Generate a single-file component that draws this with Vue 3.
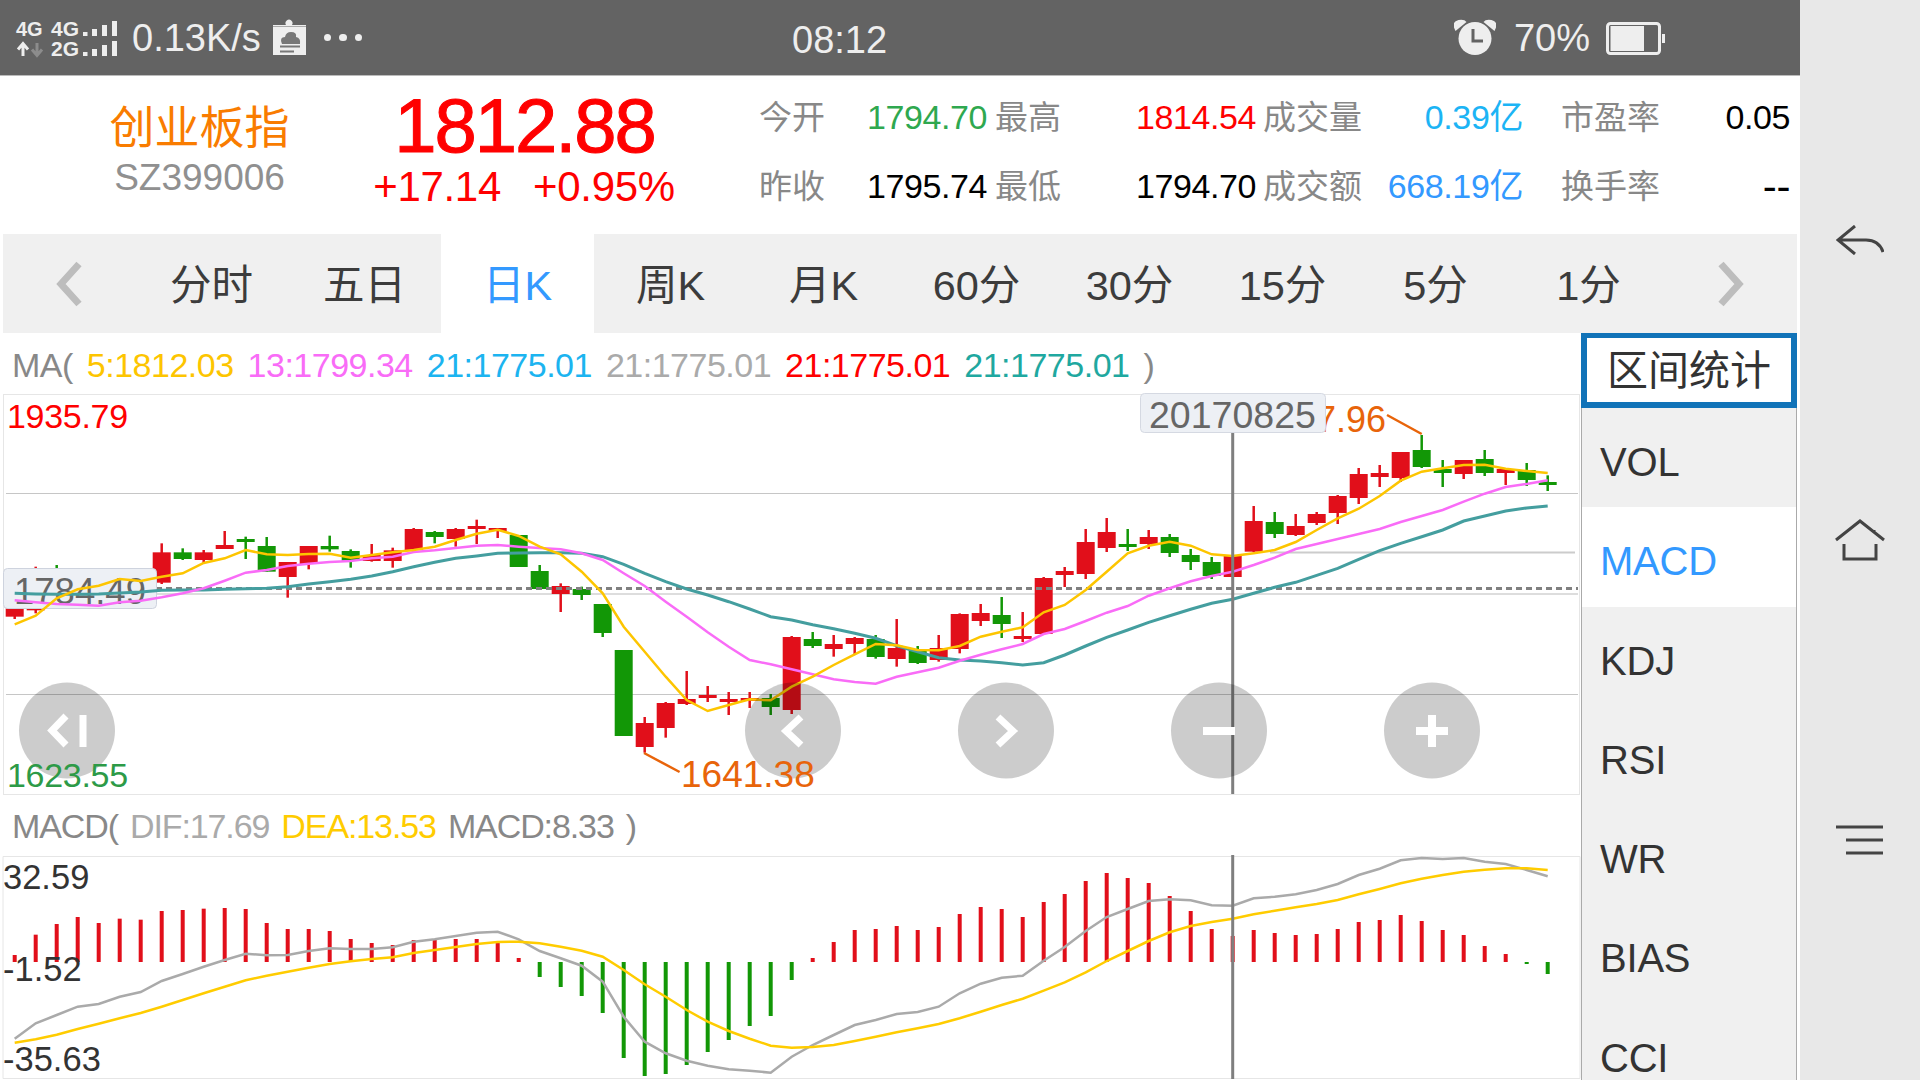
<script setup>
// 行情数据: the values below are y offsets inside each chart, in thirds of a pixel
const candleX = i => 14.7 + 21 * i
const priceY = v => 390 + v / 3
const macdY = v => 800 + v / 3

const tabs = ['分时', '五日', '日K', '周K', '月K', '60分', '30分', '15分', '5分', '1分']
const indicators = ['VOL', 'MACD', 'KDJ', 'RSI', 'WR', 'BIAS', 'CCI']

// [dir, wick top, body top, body bottom, wick bottom]
const rawCandles = [
  ['r', 640, 655, 680, 687], ['r', 530, 655, 661, 670], ['g', 525, 560, 570, 610], ['g', 560, 575, 590, 610],
  ['r', 570, 585, 600, 620], ['r', 570, 585, 600, 610], ['g', 575, 590, 600, 620], ['r', 460, 487, 578, 582],
  ['g', 475, 487, 507, 510], ['r', 480, 487, 510, 520], ['r', 423, 465, 477, 477], ['g', 440, 447, 456, 507],
  ['g', 441, 468, 545, 545], ['r', 516, 516, 561, 623], ['r', 468, 468, 522, 538], ['g', 437, 468, 478, 485],
  ['g', 478, 483, 512, 533], ['r', 462, 495, 513, 515], ['r', 473, 481, 513, 533], ['r', 414, 417, 480, 484],
  ['g', 423, 426, 441, 460], ['r', 414, 417, 447, 470], ['r', 389, 408, 417, 462], ['r', 414, 414, 423, 444],
  ['g', 435, 435, 531, 531], ['g', 525, 543, 597, 597], ['r', 580, 588, 612, 666], ['g', 590, 597, 615, 630],
  ['g', 642, 642, 729, 741], ['g', 780, 780, 1038, 1038], ['r', 981, 999, 1071, 1088], ['r', 936, 939, 1014, 1043],
  ['r', 843, 927, 942, 945], ['r', 888, 915, 924, 936], ['r', 906, 927, 936, 975], ['r', 906, 924, 933, 954],
  ['g', 912, 924, 951, 975], ['r', 738, 741, 960, 972], ['g', 726, 747, 768, 774], ['r', 735, 762, 777, 800],
  ['r', 741, 744, 762, 792], ['g', 735, 747, 801, 806], ['r', 687, 774, 807, 830], ['g', 768, 780, 819, 822],
  ['r', 735, 774, 810, 815], ['r', 670, 672, 777, 790], ['r', 642, 669, 693, 708], ['g', 621, 675, 702, 744],
  ['r', 666, 738, 747, 756], ['r', 561, 564, 732, 732], ['r', 531, 543, 555, 591], ['r', 417, 456, 552, 567],
  ['r', 384, 426, 474, 486], ['g', 417, 462, 471, 483], ['r', 420, 441, 462, 477], ['g', 432, 441, 489, 501],
  ['g', 477, 495, 516, 540], ['g', 501, 516, 558, 567], ['r', 498, 498, 561, 561], ['r', 348, 393, 485, 487],
  ['g', 366, 396, 432, 444], ['r', 372, 408, 435, 438], ['r', 366, 372, 399, 405], ['r', 315, 318, 369, 402],
  ['r', 234, 252, 324, 342], ['r', 225, 249, 261, 291], ['r', 186, 186, 264, 276], ['g', 135, 180, 231, 234],
  ['g', 210, 237, 249, 291], ['r', 210, 210, 252, 267], ['g', 180, 207, 249, 258], ['r', 237, 237, 249, 285],
  ['g', 219, 240, 270, 288], ['g', 256, 276, 285, 303]
]
const candles = rawCandles.map((c, i) => ({
  x: candleX(i),
  color: c[0] === 'r' ? '#e10f1a' : '#129706',
  wickTop: priceY(c[1]),
  top: priceY(c[2]),
  height: (c[3] - c[2]) / 3,
  wickBottom: priceY(c[4])
}))

const ma5 = [703, 677, 625, 598, 587, 567, 573, 560, 550, 519, 505, 480, 493, 495, 492, 491, 503, 495, 487, 480, 470, 450, 431, 419, 438, 470, 493, 545, 610, 710, 785, 860, 930, 963, 945, 928, 931, 890, 860, 825, 793, 762, 766, 780, 781, 768, 740, 725, 712, 667, 645, 600, 545, 490, 467, 455, 467, 493, 498, 490, 480, 456, 420, 385, 356, 318, 272, 245, 235, 225, 224, 236, 243, 249]
const ma13 = [631, 637, 642, 644, 647, 637, 632, 622, 610, 595, 572, 548, 540, 528, 521, 516, 513, 505, 500, 486, 481, 474, 467, 465, 470, 474, 478, 490, 510, 550, 588, 635, 680, 727, 770, 810, 823, 838, 853, 868, 876, 881, 860, 847, 833, 812, 794, 778, 762, 732, 717, 693, 668, 648, 617, 595, 574, 558, 545, 525, 503, 477, 462, 447, 432, 417, 396, 378, 360, 335, 311, 291, 282, 271]
const ma21 = [610, 612, 613, 613, 612, 609, 606, 601, 600, 600, 598, 596, 595, 590, 582, 575, 568, 558, 545, 530, 517, 505, 498, 490, 489, 488, 488, 490, 500, 523, 550, 575, 597, 615, 635, 657, 680, 690, 704, 716, 730, 745, 767, 785, 803, 810, 813, 818, 825, 818, 795, 768, 742, 720, 697, 677, 658, 640, 628, 610, 592, 577, 556, 535, 508, 482, 460, 440, 420, 393, 378, 363, 354, 348]

const dif = [716, 670, 645, 620, 612, 590, 576, 543, 522, 500, 480, 461, 466, 465, 453, 445, 447, 447, 442, 425, 418, 408, 398, 395, 418, 453, 475, 497, 545, 650, 725, 760, 782, 797, 808, 812, 818, 770, 735, 705, 675, 660, 642, 636, 620, 580, 551, 533, 527, 482, 441, 393, 351, 327, 303, 298, 301, 316, 317, 295, 290, 283, 270, 252, 225, 206, 181, 174, 177, 174, 185, 192, 210, 229]
const dea = [728, 718, 704, 687, 671, 655, 639, 620, 600, 580, 560, 541, 527, 515, 503, 492, 484, 477, 472, 459, 450, 441, 432, 426, 425, 430, 440, 452, 470, 510, 553, 590, 630, 665, 693, 716, 737, 743, 741, 735, 723, 710, 697, 685, 672, 655, 635, 615, 596, 572, 547, 517, 483, 453, 423, 397, 378, 366, 356, 343, 332, 322, 312, 300, 283, 267, 250, 236, 225, 215, 209, 205, 205, 210]
// bar end per candle; the bars grow out of the zero line at 486
const macdEnds = [465, 404, 372, 351, 369, 356, 359, 333, 330, 326, 324, 327, 369, 387, 387, 393, 417, 429, 435, 420, 420, 417, 417, 426, 474, 531, 561, 588, 639, 774, 828, 822, 795, 756, 720, 678, 648, 540, 474, 426, 390, 387, 378, 390, 381, 342, 321, 327, 351, 306, 282, 243, 219, 234, 249, 288, 333, 387, 408, 390, 399, 405, 402, 387, 366, 360, 345, 363, 390, 405, 438, 462, 492, 522]

const line = (values, toY) => values.map((v, i) => `${candleX(i)},${toY(v).toFixed(1)}`).join(' ')

const macdBars = macdEnds.map((end, i) => ({
  x: candleX(i) - 2,
  y: macdY(Math.min(end, 486)),
  height: Math.abs(end - 486) / 3,
  color: end < 486 ? '#e10f1a' : '#129706'
}))

const chartButtons = [
  { x: 67, icon: 'M66 716 52 730.500 66 745M83 715V747', width: 7 },
  { x: 793, icon: 'M801 717 786 731 801 745', width: 7 },
  { x: 1006, icon: 'M998 717 1013 731 998 745', width: 7 },
  { x: 1219, icon: 'M1203 731H1235', width: 8 },
  { x: 1432, icon: 'M1416 731H1448M1432 715V747', width: 8 }
]
</script>

<template>
  <div class="screen">
    <div class="main">
      <header class="status">
        <div class="status-left">
          <svg class="signal" width="104" height="40" viewBox="15 18 104 40">
            <g fill="#eee" font-family="Liberation Sans" font-weight="700">
              <text x="16" y="35" font-size="20">4G</text>
              <text x="51" y="35" font-size="21">4G</text>
              <text x="51" y="55" font-size="21">2G</text>
            </g>
            <path d="M23 55V44M18 48.500 23 42.500 28 48.500" stroke="#eee" stroke-width="3" fill="none" />
            <path d="M37 42V53M32 48.500 37 54.500 42 48.500" stroke="#8c8c8c" stroke-width="3" fill="none" />
            <path d="M83 31h4.500v4h-4.500zM92 28h5v7h-5zM102 24h5v11h-5zM112 20h5v15h-5zM83 51h4.500v4h-4.500zM92 48h5v7h-5zM102 44h5v11h-5zM112 40h5v15h-5z" fill="#eee" />
          </svg>
          <span class="speed">0.13K/s</span>
          <svg class="clip" width="34" height="37" viewBox="272 18 34 37">
            <path d="M273 24h13a3.500 3.500 0 1 1 6 0h14v30h-33z" fill="#eee" />
            <path d="M273 25.500h33" stroke="#aaa" />
            <path d="M282 43q-3-7 3-7 1-5 6-5 6 0 5 5 5 1 4 7z" fill="#777" />
            <path d="M280 45.500h20M280 50.500h14" stroke="#777" stroke-width="2" />
          </svg>
          <span class="dots"><i></i><i></i><i></i></span>
        </div>
        <span class="time">08:12</span>
        <div class="status-right">
          <svg width="42" height="37" viewBox="1455 19 42 37">
            <circle cx="1476" cy="38.500" r="16.500" fill="#eee" />
            <path d="M1456.500 31q-5-9 3-11 6-1 8 2zM1495.500 31q5-9-3-11-6-1-8 2z" fill="#eee" />
            <path d="M1474 29V41H1484" stroke="#636363" stroke-width="3" fill="none" />
          </svg>
          <span class="battery-text">70%</span>
          <svg width="59" height="34" viewBox="1606 20 59 34">
            <rect x="1607.500" y="22.500" width="52" height="30" rx="3" fill="none" stroke="#eee" stroke-width="3" />
            <rect x="1610.500" y="25" width="33.500" height="25" fill="#eee" />
            <rect x="1662" y="33" width="3" height="9" fill="#eee" />
          </svg>
        </div>
      </header>

      <section class="info">
        <div class="name">
          <div class="name-cn">创业板指</div>
          <div class="name-code">SZ399006</div>
        </div>
        <div class="quote">
          <div class="price">1812.88</div>
          <div class="change">
            <span>+17.14</span>
            <span>+0.95%</span>
          </div>
        </div>
        <div class="stats">
          <span class="label">今开</span><span class="green">1794.70</span>
          <span class="label">最高</span><span class="red">1814.54</span>
          <span class="label">成交量</span><span class="right cyan">0.39亿</span>
          <span class="label rate">市盈率</span><span class="right black">0.05</span>
          <span class="label">昨收</span><span class="black">1795.74</span>
          <span class="label">最低</span><span class="black">1794.70</span>
          <span class="label">成交额</span><span class="right blue">668.19亿</span>
          <span class="label rate">换手率</span><span class="right black dash">--</span>
        </div>
      </section>

      <nav class="tabs">
        <div class="arrow">
          <svg width="30" height="48" viewBox="0 0 30 48"><path d="M25 4 7 24 25 44" fill="none" stroke="#bdbdbd" stroke-width="7" /></svg>
        </div>
        <div v-for="tab in tabs" :key="tab" class="tab" :class="{ active: tab === '日K' }">{{ tab }}</div>
        <div class="arrow">
          <svg width="30" height="48" viewBox="0 0 30 48"><path d="M5 4 23 24 5 44" fill="none" stroke="#bdbdbd" stroke-width="7" /></svg>
        </div>
      </nav>

      <div class="content">
        <div class="charts">
          <div class="legend">
            <span class="c-gray">MA(</span>
            <span class="c-yellow">5:1812.03</span>
            <span class="c-pink">13:1799.34</span>
            <span class="c-sky">21:1775.01</span>
            <span class="c-light">21:1775.01</span>
            <span class="c-red">21:1775.01</span>
            <span class="c-teal">21:1775.01</span>
            <span class="c-gray">)</span>
          </div>
          <svg class="price-chart" width="1581" height="405" viewBox="0 390 1581 405">
            <rect x="3.500" y="394.500" width="1576" height="400" fill="none" stroke="#e6e6e6" />
            <path d="M6 493.500H1578M6 694.500H1578" stroke="#c6c6c6" />
            <path d="M1270 552.500H1575" stroke="#ccc" stroke-width="2" />
            <path d="M3 594H1578" stroke="#ddd" stroke-width="2" />

            <g v-for="c in candles" :key="c.x">
              <line :x1="c.x" :x2="c.x" :y1="c.wickTop" :y2="c.wickBottom" :stroke="c.color" stroke-width="2.500" />
              <rect :x="c.x - 9" :y="c.top" width="18" :height="c.height" :fill="c.color" />
            </g>

            <path d="M6 588.500H1578" stroke="#808080" stroke-width="3" stroke-dasharray="6 4" />

            <rect x="3.500" y="568.500" width="153" height="40" rx="4" fill="#edf0f5" stroke="#ced3de" />
            <text x="14" y="603.500" class="chart-text" font-size="36.500" fill="#666">1784.49</text>

            <polyline :points="line(ma21, priceY)" fill="none" stroke="#449e9f" stroke-width="3" />
            <polyline :points="line(ma13, priceY)" fill="none" stroke="#f96cf7" stroke-width="2.500" />
            <polyline :points="line(ma5, priceY)" fill="none" stroke="#fdc500" stroke-width="2.500" />

            <text x="1386" y="432" text-anchor="end" class="chart-text" font-size="36" fill="#e8640a">1847.96</text>
            <path d="M1387 415 1421.700 434M644 753 679.600 772" fill="none" stroke="#e8640a" stroke-width="2.500" />

            <rect x="1140.500" y="393.500" width="185" height="39" rx="4" fill="#edf0f5" stroke="#d5d9e2" />
            <text x="1149" y="428" class="chart-text" font-size="37.500" fill="#666">20170825</text>

            <path d="M1232.700 433V794" stroke="#7f7f7f" stroke-width="3" />

            <g v-for="b in chartButtons" :key="b.x">
              <circle :cx="b.x" cy="730.500" r="48" fill="#000" fill-opacity="0.2" />
              <path :d="b.icon" fill="none" stroke="#fff" :stroke-width="b.width" />
            </g>

            <text x="7" y="428" class="chart-text tall" fill="#f00">1935.79</text>
            <text x="7" y="787" class="chart-text tall" fill="#2d9a47">1623.55</text>
            <text x="681" y="787" class="chart-text" font-size="37" fill="#e8640a">1641.38</text>
          </svg>

          <div class="legend legend-macd">
            <span class="c-gray">MACD(</span>
            <span class="c-light">DIF:17.69</span>
            <span class="c-gold">DEA:13.53</span>
            <span class="c-gray">MACD:8.33</span>
            <span class="c-gray">)</span>
          </div>
          <svg class="macd-chart" width="1581" height="227" viewBox="0 853 1581 227">
            <path d="M3 856.500H1580V1078.500H3Z" fill="none" stroke="#e6e6e6" />
            <rect v-for="b in macdBars" :key="b.x" :x="b.x" :y="b.y" width="4" :height="b.height" :fill="b.color" />
            <polyline :points="line(dif, macdY)" fill="none" stroke="#aaa" stroke-width="2.500" />
            <polyline :points="line(dea, macdY)" fill="none" stroke="#fc0" stroke-width="2.500" />
            <path d="M1232.700 855V1079" stroke="#7f7f7f" stroke-width="3" />
            <text x="3" y="889" class="chart-text" font-size="34.500" fill="#333">32.59</text>
            <text x="3" y="981" class="chart-text" font-size="34.500" fill="#333">-1.52</text>
            <text x="3" y="1071" class="chart-text" font-size="34.500" fill="#333">-35.63</text>
          </svg>
        </div>

        <aside class="side">
          <div class="range-btn">区间统计</div>
          <div v-for="item in indicators" :key="item" class="indicator" :class="{ active: item === 'MACD' }">{{ item }}</div>
        </aside>
      </div>
    </div>

    <div class="nav">
      <div class="nav-item">
        <svg width="48" height="30" viewBox="1836 225 48 30">
          <path d="M1855 226 1838 240 1855 254M1838 240H1866Q1879 240 1883 252" fill="none" stroke="#444" stroke-width="3" />
        </svg>
      </div>
      <div class="nav-item">
        <svg width="50" height="44" viewBox="1836 518 50 44">
          <path d="M1837 540 1861 521 1885 540M1875 530V532M1845 544V559H1877V544" fill="none" stroke="#444" stroke-width="3" />
        </svg>
      </div>
      <div class="nav-item">
        <svg width="48" height="30" viewBox="1837 824 48 30">
          <path d="M1837 826H1884M1847 839H1884M1847 852H1884" fill="none" stroke="#444" stroke-width="3" />
        </svg>
      </div>
    </div>
  </div>
</template>

<style scoped>
.screen {
  display: flex;
  width: 1920px;
  height: 1080px;
  overflow: hidden;
  background: #fff;
  font-family: "Liberation Sans", "Noto Sans CJK SC", sans-serif;
}
.main {
  width: 1800px;
  flex-shrink: 0;
}
.status {
  display: flex;
  align-items: center;
  height: 75px;
  border-bottom: 1px solid #bbb;
  background: #636363;
  color: #eee;
  font-size: 38px;
}
.status-left {
  display: flex;
  align-items: center;
  width: 792px;
  padding-left: 15px;
  box-sizing: border-box;
}
.signal {
  margin-top: 2px;
  overflow: visible;
}
.speed {
  margin-left: 13px;
  padding-top: 2px;
}
.clip {
  margin-left: 11px;
}
.dots {
  display: flex;
  gap: 8px;
  margin-left: 18px;
}
.dots i {
  width: 7.500px;
  height: 7.500px;
  border-radius: 50%;
  background: #eee;
}
.time {
  padding-top: 6px;
}
.status-right {
  display: flex;
  align-items: center;
  margin-left: auto;
  padding-right: 135px;
}
.battery-text {
  margin: 0 16px 0 18px;
  padding-top: 2px;
}
.info {
  display: flex;
  height: 158px;
}
.name {
  width: 293px;
  margin-left: 53px;
  padding-top: 27px;
  text-align: center;
}
.name-cn {
  color: #f97c00;
  font-size: 45px;
  line-height: 52px;
}
.name-code {
  margin-top: 2px;
  color: #909090;
  font-size: 37px;
  line-height: 42px;
}
.quote {
  width: 360px;
  padding-top: 15px;
  color: #f00;
  text-align: center;
}
.price {
  margin-left: -3px;
  font-size: 76px;
  line-height: 70px;
  letter-spacing: -2px;
  -webkit-text-stroke: 1px #f00;
}
.change {
  display: flex;
  justify-content: center;
  gap: 32px;
  margin-top: 2px;
  margin-left: -4px;
  font-size: 42px;
  line-height: 48px;
  letter-spacing: -0.300px;
}
.stats {
  display: grid;
  grid-template-columns: 108px 128px 141px 127px 97px 163px 135px 132px;
  grid-auto-rows: 69px;
  margin-left: 53px;
  padding-top: 7px;
  font-size: 34px;
  line-height: 69px;
  letter-spacing: -0.400px;
  white-space: nowrap;
}
.label {
  color: #888;
  font-size: 33px;
  letter-spacing: 0;
}
.rate {
  padding-left: 38px;
}
.right {
  text-align: right;
}
.dash {
  font-size: 42px;
}
.green { color: #2fa84f; }
.red { color: #f00; }
.black { color: #000; }
.cyan { color: #1cb4f5; }
.blue { color: #39f; }
.tabs {
  display: flex;
  width: 1794px;
  height: 99px;
  margin-left: 3px;
  background: #f0f0f0;
  color: #3c3c3c;
  font-size: 41.500px;
}
.arrow {
  display: flex;
  flex: 1;
  align-items: center;
  justify-content: center;
}
.tab {
  width: 153px;
  padding-top: 5px;
  box-sizing: border-box;
  line-height: 94px;
  text-align: center;
}
.tab.active {
  background: #fff;
  color: #39f;
}
.content {
  display: flex;
  height: 747px;
}
.charts {
  width: 1581px;
}
.legend {
  display: flex;
  gap: 14px;
  height: 57px;
  padding: 8px 0 0 12px;
  box-sizing: border-box;
  font-size: 34px;
  line-height: 49px;
  letter-spacing: -0.500px;
  white-space: nowrap;
}
.legend-macd {
  height: 58px;
  gap: 12px;
  padding-top: 7px;
  letter-spacing: -1.100px;
}
.price-chart,
.macd-chart {
  display: block;
  overflow: visible;
}
.chart-text {
  font-family: "Liberation Sans", sans-serif;
}
.tall {
  font-size: 34px;
  letter-spacing: -0.300px;
}
.c-gray { color: #888; }
.c-light { color: #aaa; }
.c-yellow { color: #fdc500; }
.c-gold { color: #fc0; }
.c-pink { color: #f96cf7; }
.c-sky { color: #1cb4f0; }
.c-red { color: #f00; }
.c-teal { color: #1fa8a0; }
.side {
  width: 216px;
  overflow: hidden;
}
.range-btn {
  height: 75px;
  border: solid #1173b8;
  border-width: 5px 6px 6px;
  box-sizing: border-box;
  color: #333;
  font-size: 41px;
  line-height: 67px;
  text-align: center;
}
.indicator {
  height: 99.300px;
  padding: 9px 0 0 18px;
  border: solid #aaa;
  border-width: 0 1px;
  box-sizing: border-box;
  background: #f0f0f0;
  color: #333;
  font-size: 40px;
  line-height: 90.300px;
  letter-spacing: -0.200px;
}
.indicator.active {
  background: #fff;
  color: #39f;
}
.nav {
  display: flex;
  flex: 1;
  flex-direction: column;
  justify-content: center;
  background: #e8e8e8;
}
.nav-item {
  display: flex;
  align-items: center;
  justify-content: center;
  height: 300px;
}
</style>
